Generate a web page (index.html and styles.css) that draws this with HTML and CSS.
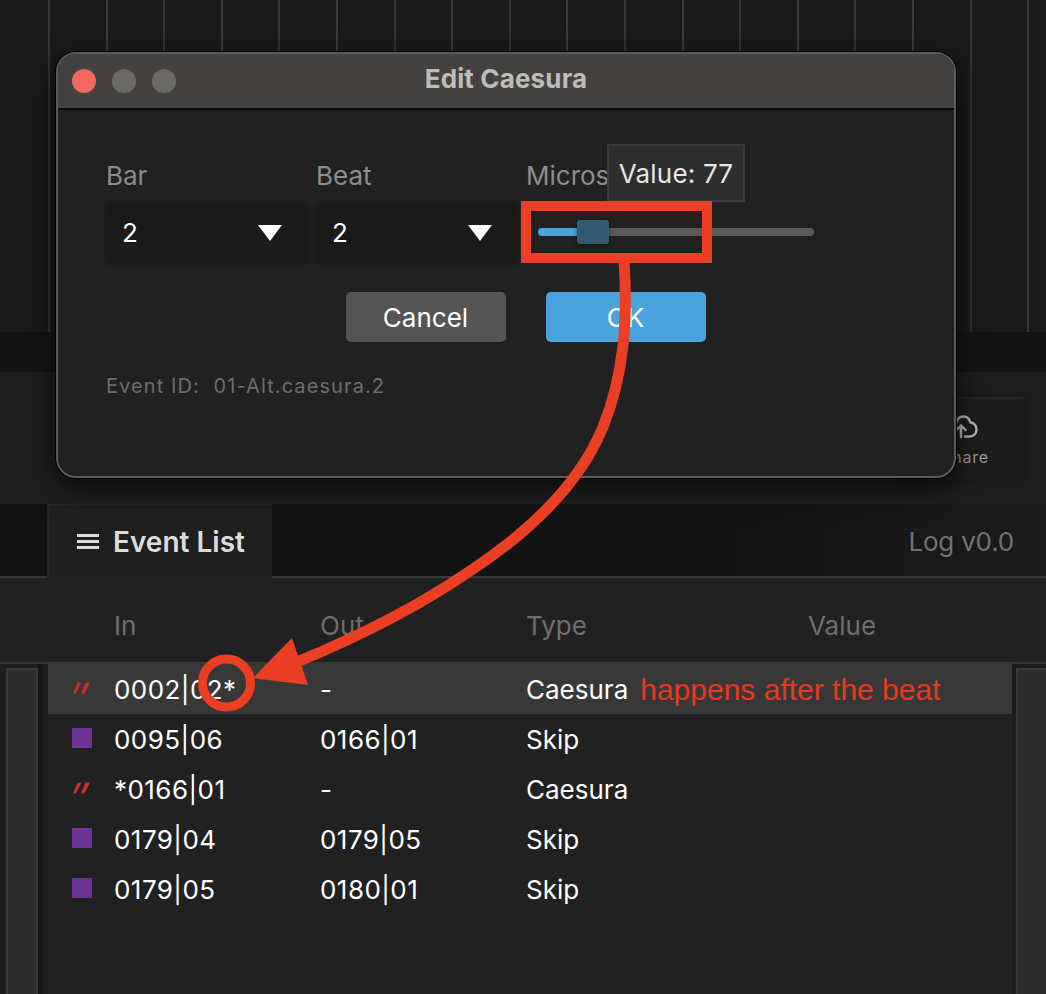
FILE: index.html
```html
<!DOCTYPE html>
<html lang="en">
<head>
<meta charset="utf-8">
<title>Edit Caesura</title>
<link rel="stylesheet" href="styles.css">
</head>
<body>
<div class="page">
  <div class="timeline">
    <i></i><i></i><i></i><i></i><i></i><i></i><i></i><i></i><i></i><i></i><i></i><i></i><i></i><i></i><i></i><i></i><i></i><i></i>
  </div>
  <div class="band"></div>
  <div class="toolbar">
    <div class="share">
      <svg class="share-icon" viewBox="0 0 28 24" width="28" height="24" fill="none" stroke="#b9b9b9" stroke-width="2.4" stroke-linecap="round" stroke-linejoin="round">
        <path d="M11 22V10.500M6.500 15 11 10.500l4.500 4.500"/>
        <path d="M6 9C6.500 4 10 1.500 13.500 1.500c3.500 0 6 2.500 6.800 6 3.500 0 6.200 3 6.200 7 0 4-3 7-6.500 7H15"/>
      </svg>
      <span class="share-label">Share</span>
    </div>
  </div>
  <div class="tabs">
    <div class="tab">
      <span class="burger"><i></i><i></i><i></i></span>
      <span>Event List</span>
    </div>
    <div class="version">Log v0.0</div>
  </div>
  <div class="list-head">
    <span class="col-in">In</span>
    <span class="col-out">Out</span>
    <span class="col-type">Type</span>
    <span>Value</span>
  </div>
  <div class="list-body">
    <div class="rail rail-left"><div class="rail-panel"></div></div>
    <div class="rows">
      <div class="row selected">
        <svg class="mark" viewBox="0 0 20 20" width="20" height="20"><path d="M5.500 4.500H9.500L4 15.500H1zM13.500 4.500H18L12.500 15.500H9z" fill="#c9302c"/></svg>
        <span class="col-in num">0002|02*</span><span class="col-out num">-</span>
        <span class="col-type">Caesura<em class="note">happens after the beat</em></span>
      </div>
      <div class="row">
        <span class="swatch"></span>
        <span class="col-in num">0095|06</span><span class="col-out num">0166|01</span><span class="col-type">Skip</span>
      </div>
      <div class="row">
        <svg class="mark" viewBox="0 0 20 20" width="20" height="20"><path d="M5.500 4.500H9.500L4 15.500H1zM13.500 4.500H18L12.500 15.500H9z" fill="#c9302c"/></svg>
        <span class="col-in num">*0166|01</span><span class="col-out num">-</span><span class="col-type">Caesura</span>
      </div>
      <div class="row">
        <span class="swatch"></span>
        <span class="col-in num">0179|04</span><span class="col-out num">0179|05</span><span class="col-type">Skip</span>
      </div>
      <div class="row">
        <span class="swatch"></span>
        <span class="col-in num">0179|05</span><span class="col-out num">0180|01</span><span class="col-type">Skip</span>
      </div>
    </div>
    <div class="rail rail-right"><div class="rail-panel"></div></div>
  </div>

  <div class="dialog">
    <div class="titlebar">
      <span class="light red"></span><span class="light"></span><span class="light"></span>
      <span class="title">Edit Caesura</span>
    </div>
    <div class="dialog-body">
      <div class="fields">
        <div class="field">
          <label class="label">Bar</label>
          <div class="select"><span>2</span><span class="caret"></span></div>
        </div>
        <div class="field">
          <label class="label">Beat</label>
          <div class="select"><span>2</span><span class="caret"></span></div>
        </div>
        <div class="field">
          <label class="label">Micros</label>
          <div class="slider">
            <div class="track"><div class="fill"></div><div class="thumb"></div></div>
          </div>
          <div class="tooltip">Value: 77</div>
        </div>
      </div>
      <div class="actions">
        <button class="btn cancel">Cancel</button>
        <button class="btn ok">OK</button>
      </div>
      <div class="event-id">Event ID:&nbsp; 01-Alt.caesura.2</div>
    </div>
  </div>

  <svg class="annotations" viewBox="0 0 1046 994" width="1046" height="994" fill="none" stroke="#ea3f24">
    <rect x="526" y="206" width="181" height="52" stroke-width="10"/>
    <path d="M624 260C628 320 624 375 603 427C575 495 510 545 467 573C420 605 360 636 297 662" stroke-width="11"/>
    <path d="M253 678 292 638 308 685Z" fill="#ea3f24" stroke="none"/>
    <circle cx="226.500" cy="683" r="24" stroke-width="9"/>
  </svg>
</div>
</body>
</html>
```
FILE: styles.css
```css
* { box-sizing: border-box; }
html, body { margin: 0; padding: 0; background: #212121; }
.page {
  position: relative;
  width: 1046px;
  height: 994px;
  overflow: hidden;
  display: flex;
  flex-direction: column;
  font-family: Inter, "Noto Sans", sans-serif;
  font-size: 26px;
  color: #fff;
}

/* background app */
.timeline {
  height: 332px;
  background: #1a1a1a;
  display: flex;
  padding-left: 48px;
}
.timeline i {
  flex: 0 0 57.6px;
  border-left: 2px solid #333;
}
.timeline i:nth-child(even) { border-left-color: #3a3a3a; }
.band { height: 40px; background: #141414; }
.toolbar {
  height: 132px;
  background: #1f1f1f;
  display: flex;
  justify-content: flex-end;
  padding: 25px 22px 23px 0;
}
.share {
  width: 124px;
  background: #1d1d1d;
  box-shadow: 0 0 10px rgba(0,0,0,.35);
  border-top: 2px solid #262626;
  display: flex;
  flex-direction: column;
  align-items: center;
  padding-top: 16px;
  gap: 8px;
  font-size: 16px;
  letter-spacing: .8px;
  color: #9a9a9a;
}
.share-icon { margin-left: 4px; }
.share-label { margin-left: 6px; }
.tabs {
  height: 74px;
  background: linear-gradient(90deg, #121212 30%, #141414 70%, #1a1a1a 95%);
  border-bottom: 2px solid #383838;
  display: flex;
  justify-content: space-between;
  padding-left: 47px;
}
.tab {
  width: 225px;
  height: 74px;
  background: #1f1f1f;
  border-left: 2px solid #262626;
  border-top: 1px solid #262626;
  display: flex;
  align-items: center;
  gap: 14px;
  padding: 0 0 0 28px;
  font-size: 28px;
  font-weight: 600;
  color: #dcdcdc;
}
.burger { display: flex; flex-direction: column; gap: 3px; }
.burger i { display: block; width: 22px; height: 3px; background: #dcdcdc; }
.version {
  padding: 2px 32px 0 0;
  align-self: center;
  color: #6d7276;
  letter-spacing: -.2px;
}
.list-head {
  height: 84px;
  background: #212121;
  display: flex;
  align-items: center;
  padding: 10px 0 0 114px;
  color: #6e6e6e;
}
.col-in { flex: 0 0 206px; }
.col-out { flex: 0 0 206px; }
.col-type { flex: 0 0 282px; display: flex; align-items: center; }
.num { letter-spacing: .45px; }
.list-body { flex: 1; display: flex; background: #212121; }
.rail {
  flex: 0 0 48px;
  border-top: 2px solid #333;
  padding: 4px 0 0 6px;
  background: linear-gradient(90deg, #1d1d1d 0 38px, #171717 38px 42px, #1e1e1e 42px);
}
.rail-right {
  flex: 0 0 34px;
  padding: 4px 0 0 4px;
  background: #1b1b1b;
}
.rail-panel {
  width: 32px;
  height: 100%;
  background: #2c2c2c;
  border: 2px solid #3a3a3a;
  border-bottom: 0;
}
.rail-right .rail-panel { width: 30px; border-right: 0; }
.rows { flex: 1; }
.row {
  height: 50px;
  display: flex;
  align-items: center;
  padding-left: 66px;
  position: relative;
}
.selected { height: 52px; padding-top: 2px; background: #383838; }
.mark, .swatch { position: absolute; left: 24px; top: 50%; margin-top: -11px; }
.selected .mark { margin-top: -10px; }
.swatch { display: block; width: 20px; height: 20px; background: #6b3494; }
.note {
  margin: 2px 0 0 12px;
  font-family: "Liberation Sans", Arial, sans-serif;
  font-style: normal;
  font-size: 30px;
  color: #e63a1f;
  white-space: nowrap;
}

/* dialog */
.dialog {
  position: absolute;
  left: 56px;
  top: 52px;
  width: 900px;
  height: 426px;
  background: #212121;
  border: 2px solid #5a5a5a;
  border-radius: 20px;
  box-shadow: 0 0 0 1px #000, 0 10px 30px rgba(0,0,0,.7);
  overflow: hidden;
}
.titlebar {
  position: relative;
  height: 56px;
  background: #444240;
  border-bottom: 2px solid #0c0c0c;
  display: flex;
  align-items: center;
  gap: 16px;
  padding: 0 0 0 14px;
}
.light { width: 24px; height: 24px; border-radius: 50%; background: #6a6965; }
.light.red { background: #f0685f; }
.title {
  position: absolute;
  left: 0;
  right: 0;
  top: 8px;
  text-align: center;
  font-weight: 700;
  font-size: 26px;
  line-height: 34px;
  letter-spacing: .15px;
  color: #bdbcb9;
}
.dialog-body { padding: 48px 0 0 49px; }
.fields { display: flex; gap: 10px; }
.field { position: relative; display: flex; flex-direction: column; gap: 9px; width: 200px; }
.label { height: 36px; line-height: 36px; color: #8d8d8d; margin-left: -1px; }
.select {
  height: 59px;
  background: #1b1b1b;
  box-shadow: 0 1px 6px rgba(0,0,0,.4);
  display: flex;
  align-items: center;
  justify-content: space-between;
  padding: 0 25px 0 15px;
}
.caret {
  width: 0;
  height: 0;
  border-left: 12px solid transparent;
  border-right: 12px solid transparent;
  border-top: 16px solid #fff;
}
.slider { height: 59px; display: flex; align-items: center; padding: 0 0 2px 11px; }
.track {
  position: relative;
  flex: 0 0 276px;
  height: 8px;
  border-radius: 4px;
  background: #5a5a5a;
}
.fill { width: 50px; height: 8px; border-radius: 4px 0 0 4px; background: #4ba3dd; }
.thumb {
  position: absolute;
  left: 39px;
  top: -8px;
  width: 32px;
  height: 24px;
  border-radius: 3px;
  background: #345a70;
  box-shadow: 0 1px 5px rgba(0,0,0,.5);
}
.tooltip {
  position: absolute;
  left: 80px;
  top: -14px;
  width: 138px;
  height: 58px;
  background: #2e2e2e;
  border: 2px solid #3c3c3c;
  display: flex;
  align-items: center;
  justify-content: center;
  letter-spacing: .2px;
  color: #e6e6e6;
  white-space: nowrap;
}
.actions { display: flex; justify-content: center; gap: 40px; margin: 30px 0 0 -10px; }
.btn {
  width: 160px;
  height: 50px;
  border: 0;
  border-radius: 5px;
  font: inherit;
  color: #fff;
}
.cancel { background: #555; }
.ok { background: #4ba3dd; }
.event-id {
  margin: 32px 0 0 -1px;
  font-size: 20px;
  letter-spacing: 1.1px;
  color: #6e6e6e;
}

.annotations { position: absolute; left: 0; top: 0; pointer-events: none; }
```
